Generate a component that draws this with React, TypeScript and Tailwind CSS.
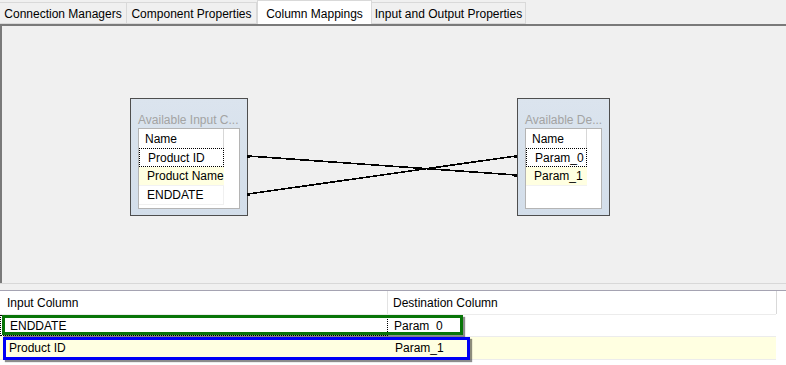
import React from "react"

const font = { fontFamily: '"Liberation Sans", "Noto Sans", sans-serif' }

const tabs = [
  { label: "Connection Managers", w: "w-[127px]", active: false },
  { label: "Component Properties", w: "w-[130px]", active: false },
  { label: "Column Mappings", w: "w-[115px]", active: true },
  { label: "Input and Output Properties", w: "w-[154px]", active: false },
]

function Tab({ label, w, active }: { label: string; w: string; active: boolean }) {
  if (active) {
    return (
      <div className={`${w} h-[24px] bg-white border border-b-0 border-[#d9d9d9] flex items-start justify-center pt-[4px] text-[12px] text-black whitespace-nowrap z-10`}>
        {label}
      </div>
    )
  }
  return (
    <div className={`${w} h-[22px] bg-[#f0f0f0] border-y border-r border-[#d9d9d9] flex items-center justify-center pt-[2px] text-[12px] text-black whitespace-nowrap`}>
      {label}
    </div>
  )
}

type Row = { text: string; selected?: boolean; hilite?: boolean }

function NodeBox({ title, left, width, colW, rows }: { title: string; left: string; width: string; colW: string; rows: Row[] }) {
  return (
    <div className={`absolute top-[72px] ${left} ${width} h-[118px] border border-[#4e4e4e] bg-gradient-to-b from-[#dbe4ee] to-[#d3deea] pt-[29px] px-[7px] pb-[6px] flex flex-col`}>
      <div className="absolute top-[12px] left-[7px] text-[12px] text-[#a3a3a3] whitespace-nowrap">{title}</div>
      <div className="flex-1 bg-white border border-[#b4b4b4]">
        <div className={`${colW} h-[19px] border-r border-[#d7d7d7] pl-[6px] flex items-center text-[12px] text-black whitespace-nowrap`}>Name</div>
        {rows.map((r) => (
          <div
            key={r.text}
            className={`${colW} h-[19px] pl-[8px] flex items-center text-[12px] text-black whitespace-nowrap ${
              r.selected ? "border border-dotted border-black" : r.hilite ? "bg-[#ffffe1] border-b border-[#f2f2f2]" : "border-b border-r border-[#f0f0f0]"
            }`}
          >
            {r.text}
          </div>
        ))}
      </div>
    </div>
  )
}

export default function App() {
  return (
    <div className="w-[786px] h-[365px] bg-[#f0f0f0] overflow-hidden flex flex-col" style={font}>
      {/* tabs */}
      <div className="h-[24px] flex items-end relative">
        {tabs.map((t) => (
          <Tab key={t.label} {...t} />
        ))}
      </div>

      {/* mapping canvas */}
      <div className="h-[259px] relative border-t-2 border-l-2 border-t-[#7a7a7a] border-l-[#7a7a7a] bg-[#f0f0f0]">
        <NodeBox
          title="Available Input C..."
          left="left-[128px]"
          width="w-[118px]"
          colW="w-[85px]"
          rows={[
            { text: "Product ID", selected: true },
            { text: "Product Name", hilite: true },
            { text: "ENDDATE" },
          ]}
        />
        <NodeBox
          title="Available De..."
          left="left-[515px]"
          width="w-[93px]"
          colW="w-[61px]"
          rows={[
            { text: "Param_0", selected: true },
            { text: "Param_1", hilite: true },
          ]}
        />
        <svg className="absolute left-0 top-0" width="784" height="257" shapeRendering="crispEdges">
          <line x1="246" y1="130" x2="514" y2="149" stroke="black" strokeWidth="1.6" />
          <line x1="246" y1="168" x2="514" y2="130" stroke="black" strokeWidth="1.6" />
          <rect x="245" y="129" width="3" height="3" fill="black" />
          <rect x="245" y="167" width="3" height="3" fill="black" />
          <rect x="512" y="129" width="3" height="3" fill="black" />
          <rect x="512" y="148" width="3" height="3" fill="black" />
        </svg>
      </div>

      {/* splitter */}
      <div className="h-[7px] bg-[#f0f0f0] border-t border-[#d8d8d8]" />

      {/* mapping grid */}
      <div className="flex-1 bg-white border-t border-[#a5a3b2] relative text-[12px] text-black whitespace-nowrap">
        <div className="w-[777px] h-[23px] flex border-r border-[#d9d9d9]">
          <div className="w-[388px] pl-[7px] flex items-center border-r border-[#e3e3e3]">Input Column</div>
          <div className="flex-1 pl-[5px] flex items-center">Destination Column</div>
        </div>
        <div className="w-[776px] h-[23px] flex border-y border-[#ececec]">
          <div className="w-[388px] pl-[9px] flex items-center border border-dotted border-black">ENDDATE</div>
          <div className="flex-1 pl-[6px] flex items-center">Param_0</div>
        </div>
        <div className="w-[776px] h-[23px] flex bg-[#ffffe1] border-b border-[#ececec]">
          <div className="w-[388px] pl-[9px] flex items-center">Product ID</div>
          <div className="flex-1 pl-[7px] flex items-center">Param_1</div>
        </div>

        {/* annotation boxes */}
        <div className="absolute left-[2px] top-[24px] w-[461px] h-[20px] border-[3px] border-[#087508] shadow-[2px_2px_1px_rgba(0,0,0,0.45)]" />
        <div className="absolute left-[3px] top-[46px] w-[467px] h-[23px] border-[3px] border-[#0000f5] shadow-[2px_2px_1px_rgba(0,0,0,0.45)]" />
      </div>
    </div>
  )
}
